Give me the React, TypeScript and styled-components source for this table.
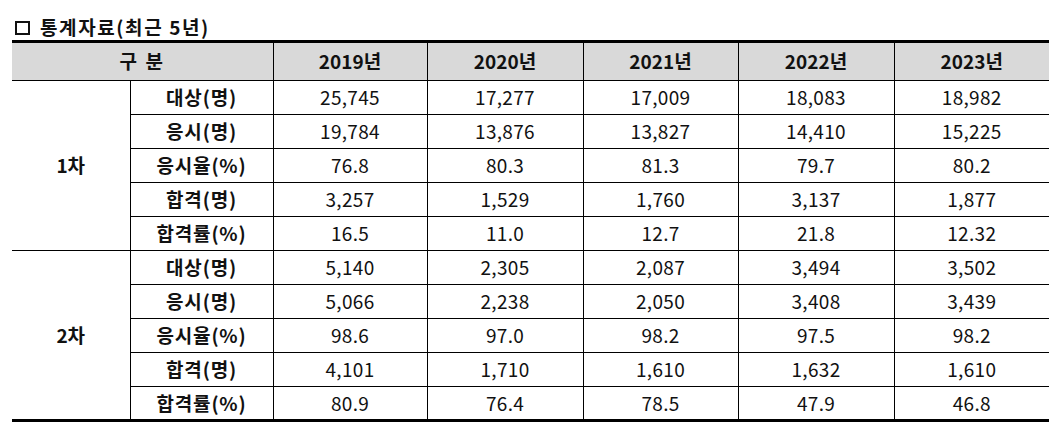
import styled, { createGlobalStyle } from 'styled-components';

const years = ['2019년', '2020년', '2021년', '2022년', '2023년'];

const groups = [
  {
    name: '1차',
    rows: [
      { label: '대상(명)', values: ['25,745', '17,277', '17,009', '18,083', '18,982'] },
      { label: '응시(명)', values: ['19,784', '13,876', '13,827', '14,410', '15,225'] },
      { label: '응시율(%)', values: ['76.8', '80.3', '81.3', '79.7', '80.2'] },
      { label: '합격(명)', values: ['3,257', '1,529', '1,760', '3,137', '1,877'] },
      { label: '합격률(%)', values: ['16.5', '11.0', '12.7', '21.8', '12.32'] },
    ],
  },
  {
    name: '2차',
    rows: [
      { label: '대상(명)', values: ['5,140', '2,305', '2,087', '3,494', '3,502'] },
      { label: '응시(명)', values: ['5,066', '2,238', '2,050', '3,408', '3,439'] },
      { label: '응시율(%)', values: ['98.6', '97.0', '98.2', '97.5', '98.2'] },
      { label: '합격(명)', values: ['4,101', '1,710', '1,610', '1,632', '1,610'] },
      { label: '합격률(%)', values: ['80.9', '76.4', '78.5', '47.9', '46.8'] },
    ],
  },
];

const colWidths = [118, 143, 154, 156, 155, 156, 155];

const App = () => {
  return (
    <>
      <GlobalStyle />
      <Page>
        <Title>
          <Box />
          <span>통계자료(최근 5년)</span>
        </Title>
        <Table>
          <colgroup>
            {colWidths.map((w, i) => (
              <col key={i} style={{ width: w }} />
            ))}
          </colgroup>
          <thead>
            <tr>
              <HeadCell colSpan={2}>구 분</HeadCell>
              {years.map((y) => (
                <HeadCell key={y}>{y}</HeadCell>
              ))}
            </tr>
          </thead>
          <tbody>
            {groups.map((group) =>
              group.rows.map((row, i) => (
                <Row key={group.name + row.label}>
                  {i === 0 && <GroupCell rowSpan={group.rows.length}>{group.name}</GroupCell>}
                  <LabelCell>{row.label}</LabelCell>
                  {row.values.map((v, j) => (
                    <ValueCell key={j}>{v}</ValueCell>
                  ))}
                </Row>
              ))
            )}
          </tbody>
        </Table>
      </Page>
    </>
  );
};

const GlobalStyle = createGlobalStyle`
  body {
    margin: 0;
    background: #fff;
    font-family: "Noto Sans CJK KR", "Noto Sans", sans-serif;
    color: #111;
  }
`;

const Page = styled.div`
  padding: 0 11px 0 12px;
  width: 1037px;
`;

const Title = styled.div`
  height: 40px;
  display: flex;
  align-items: center;
  gap: 10px;
  padding: 13px 0 0 3px;
  box-sizing: border-box;
  font-size: 19px;
  font-weight: 700;
  letter-spacing: 1.6px;
`;

const Box = styled.span`
  display: inline-block;
  box-sizing: border-box;
  width: 15px;
  height: 14px;
  margin-top: 2px;
  border: 2px solid #111;
`;

const Table = styled.table`
  width: 1037px;
  table-layout: fixed;
  border-collapse: collapse;
  border-top: 3px solid #000;
  border-bottom: 3px solid #000;
  font-size: 19px;
  text-align: center;

  td,
  th {
    padding: 0;
    border: 1px solid #000;
    line-height: 1.2;
  }
  td:first-child,
  th:first-child {
    border-left: none;
  }
  td:last-child,
  th:last-child {
    border-right: none;
  }
`;

const HeadCell = styled.th`
  height: 37px;
  background: #d9d9d9;
  font-weight: 700;
  &:first-child {
    letter-spacing: 2px;
  }
`;

const Row = styled.tr`
  height: 34px;
`;

const GroupCell = styled.td`
  font-weight: 700;
  && {
    border-left: none;
  }
`;

const LabelCell = styled.td`
  font-weight: 700;
  letter-spacing: 0.8px;
`;

const ValueCell = styled.td`
  font-weight: 400;
  letter-spacing: 0.3px;
`;

export default App;
